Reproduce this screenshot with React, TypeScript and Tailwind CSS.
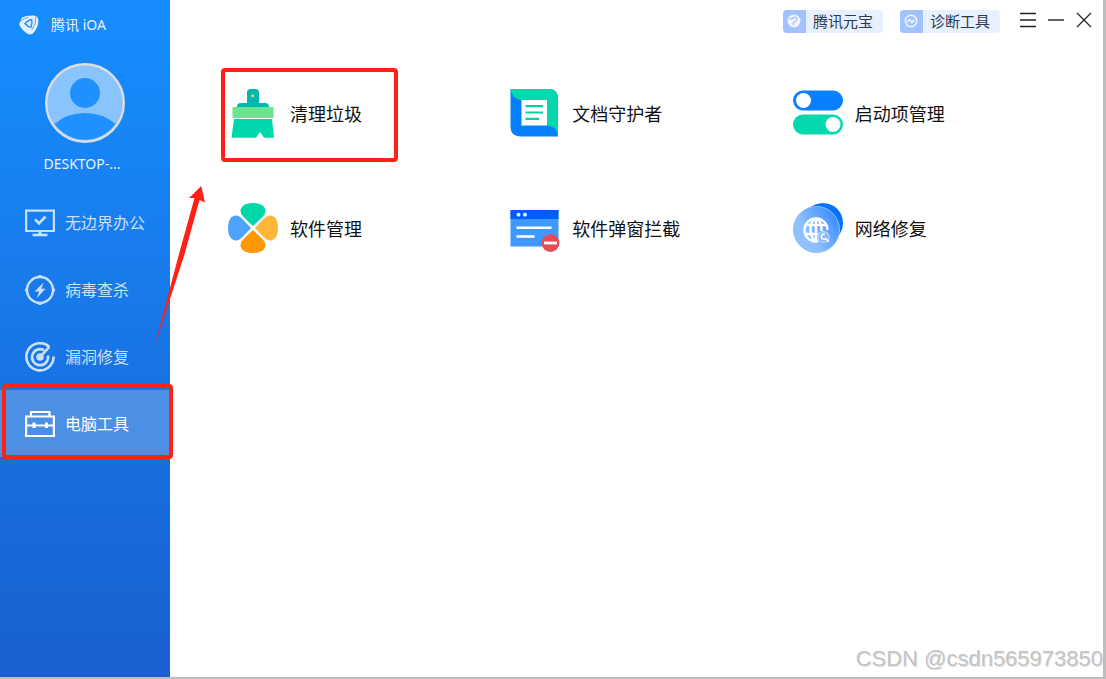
import type { ReactNode } from "react";

const LogoIcon = () => (
  <svg width="20" height="20" viewBox="0 0 20 20" aria-hidden="true">
    <path d="M3 2.500 Q8 0 15 .5 Q19 1 19.400 5 Q19.500 11 16 16 Q13 20 10.500 19.500 Q5 18 .3 10 L.6 8 Z" fill="#e4f2ff" />
    <path d="M5 8.500 Q8.500 4.500 13.300 3.800 Q14.300 8 12.500 13 Q8 12.500 5 8.500Z" fill="#1789fa" />
    <path d="M6.800 8.500 Q9 6 12.200 5.300 Q12.800 8.500 11.500 11.500 Q8.800 11 6.800 8.500Z" fill="#d3e9ff" />
    <path d="M1.500 6.500 Q5 3 9.500 2.200 M16.800 1.500 Q17.400 9 12.800 15" fill="none" stroke="#1789fa" strokeWidth=".7" />
  </svg>
);

const Avatar = () => (
  <svg width="80" height="80" viewBox="0 0 80 80" role="img" aria-label="DESKTOP">
    <circle cx="40" cy="40" r="39" fill="#8ac4ff" />
    <circle cx="40" cy="30" r="15" fill="#2190ff" />
    <path d="M9.500 61 Q22 50 40 50 Q58 50 70.500 61 A37.500 37.500 0 0 1 9.500 61Z" fill="#2190ff" />
    <circle cx="40" cy="40" r="38.800" fill="none" stroke="#dadde2" strokeWidth="2.400" />
  </svg>
);

const MonitorIcon = () => (
  <svg width="30" height="30" viewBox="0 0 30 30" fill="none" stroke="currentColor" strokeWidth="2.200" aria-hidden="true">
    <path d="M1.100 2.600H28.900V23H1.100Z" />
    <path d="M15 23V27" strokeWidth="3" />
    <path d="M7.500 27H22.500" strokeWidth="2.600" />
    <path d="M10 11.500 L14 15.500 L20.500 8.500" strokeWidth="2.600" />
  </svg>
);

const VirusIcon = () => (
  <svg width="30" height="30" viewBox="0 0 30 30" fill="none" stroke="currentColor" strokeWidth="2.400" aria-hidden="true">
    <circle cx="15" cy="15" r="13" />
    <path d="M15 0V3 M15 27V30 M0 15H3 M27 15H30" strokeWidth="3" />
    <path d="M18.500 7.500 L9.500 16.500 H14 L12 23 L20.500 13.800 H16.500Z" fill="currentColor" stroke="none" />
  </svg>
);

const RadarIcon = () => (
  <svg width="30" height="30" viewBox="0 0 30 30" fill="none" stroke="currentColor" strokeWidth="2.600" aria-hidden="true">
    <path d="M24.300 4.800 A13.600 13.600 0 1 0 28.600 14.600" />
    <path d="M19 8.200 A8 8 0 1 0 22.900 13.500" />
    <path d="M15 15 L24.300 4.800" />
    <circle cx="15" cy="15" r="2.500" fill="currentColor" />
  </svg>
);

const ToolboxIcon = () => (
  <svg width="30" height="30" viewBox="0 0 30 30" fill="none" stroke="currentColor" strokeWidth="2.200" aria-hidden="true">
    <path d="M1.100 7.500H28.900V27H1.100Z M6 7.500V3H24.500V7.500 M1 16.500H29" />
    <path d="M9 13.500V19 M21.500 13.500V19" strokeWidth="3" />
  </svg>
);

const BroomIcon = () => (
  <svg width="50" height="50" viewBox="0 0 50 50" aria-hidden="true">
    <path d="M19 4.500 Q19 1 22.500 1 H27.500 Q31 1 31 4.500 V15 H37 Q41 15 41 18.500 V19 H9 V18.500 Q9 15 13 15 H19Z" fill="#00b8ad" />
    <rect x="23.500" y="6.500" width="2.500" height="2.500" fill="#e6e84e" />
    <rect x="4.500" y="19" width="41" height="11" rx="1" fill="#69e491" />
    <path d="M6 31 H44 L46 49.800 H36 L32 44 L28 49.800 H3.500Z" fill="#00d8ab" />
  </svg>
);

const DocumentIcon = () => (
  <svg width="50" height="50" viewBox="0 0 50 50" aria-hidden="true">
    <path d="M.5 1 H40 Q48 1.500 48 11 V48.500 H11 Q.5 48.500 .5 38Z" fill="#0780ff" />
    <path d="M.5 1 H38 Q48 1 48 11 V48.500 Q47 38 37 37.500 V12 H11 Q2 11 .5 1Z" fill="#05d8ad" />
    <rect x="11.500" y="12" width="25.500" height="25.500" fill="#fff" />
    <path d="M15.500 18.200H33 M15.500 24.500H33 M15.500 30.800H29" stroke="#05d1a4" strokeWidth="2.200" />
  </svg>
);

const SwitchesIcon = () => (
  <svg width="50" height="50" viewBox="0 0 50 50" aria-hidden="true">
    <rect y="2.500" width="50" height="20" rx="10" fill="#0880ff" />
    <circle cx="10.500" cy="12.500" r="7.500" fill="#fff" />
    <rect y="26.500" width="50" height="20" rx="10" fill="#05d8ad" />
    <circle cx="40" cy="36.500" r="7.500" fill="#fff" />
  </svg>
);

const CloverIcon = () => (
  <svg width="50" height="50" viewBox="0 0 50 50" aria-hidden="true">
    <path d="M25 23 L15.500 14 Q11.500 10 12.800 6 Q15 0 25 0 Q35 0 37.200 6 Q38.500 10 34.500 14Z" fill="#00d7a8" />
    <path d="M25 27 L34.500 36 Q38.500 40 37.200 44 Q35 50 25 50 Q15 50 12.800 44 Q11.500 40 15.500 36Z" fill="#ff9800" />
    <path d="M23 25 L14 34.500 Q10 38.500 6 37.200 Q0 35 0 25 Q0 15 6 12.800 Q10 11.500 14 15.500Z" fill="#4ca4ff" />
    <path d="M27 25 L36 15.500 Q40 11.500 44 12.800 Q50 15 50 25 Q50 35 44 37.200 Q40 38.500 36 34.500Z" fill="#ffb638" />
  </svg>
);

const PopupIcon = () => (
  <svg width="50" height="50" viewBox="0 0 50 50" aria-hidden="true">
    <rect x=".5" y="7" width="48" height="36.500" fill="#3e98ff" />
    <rect x=".5" y="7" width="48" height="9" fill="#005dff" />
    <circle cx="8.500" cy="11.700" r="1.900" fill="#fff" />
    <circle cx="15" cy="11.700" r="1.900" fill="#fff" />
    <path d="M6.500 24.800H41.500 M6.500 33.500H24.500" stroke="#fff" strokeWidth="2.400" />
    <circle cx="40.500" cy="40" r="9" fill="#e34d59" />
    <path d="M34 40H47" stroke="#fff" strokeWidth="2.800" />
  </svg>
);

const NetworkIcon = () => (
  <svg width="50" height="50" viewBox="0 0 50 50" aria-hidden="true">
    <defs>
      <linearGradient id="disc" x1="0.100" y1="0.700" x2="0.900" y2="0.200">
        <stop offset="0.250" stopColor="#8fc1ff" />
        <stop offset="1" stopColor="#3f8fff" />
      </linearGradient>
    </defs>
    <circle cx="30" cy="20" r="20" fill="#0673ff" />
    <circle cx="23.500" cy="26.500" r="23" fill="url(#disc)" stroke="#8dbdf8" strokeWidth="1" />
    <g fill="none" stroke="#fff" strokeWidth="2.400">
      <path d="M34.500 27 A11.500 11.500 0 1 0 25 38.300" />
      <path d="M12 22H34 M11.500 31H25 M23 15.500V38" />
      <path d="M22 15.500 Q17 20 17.500 27 Q18 34 22 38 M24 15.500 Q29 20 28.500 28" />
    </g>
    <circle cx="30.500" cy="34" r="5.500" fill="#83b7fc" stroke="#b9d7ff" strokeWidth="1.300" />
    <path d="M32 31.500 A2.500 2.500 0 1 0 33 35 M32.500 35.500 L36 39" fill="none" stroke="#fff" strokeWidth="1.600" />
  </svg>
);

const YuanbaoIcon = () => (
  <svg width="14" height="14" viewBox="0 0 14 14" aria-hidden="true">
    <circle cx="7" cy="7" r="6.500" fill="#eef4ff" />
    <path d="M2 4.500 Q5 5.500 7 3.500 Q9.500 2.500 10 4.500 Q10 7 7.500 8 Q5.500 9 6 11" fill="none" stroke="#a1c2ff" strokeWidth="1.200" />
  </svg>
);

const DiagnoseIcon = () => (
  <svg width="14" height="14" viewBox="0 0 14 14" fill="none" stroke="#f0f6ff" strokeWidth="1.400" aria-hidden="true">
    <circle cx="7" cy="7" r="5.700" />
    <path d="M3 8 L5.500 5.500 L8 8.500 L9.500 6.500 H11" />
  </svg>
);

const navItems: { label: string; icon: ReactNode; active?: boolean }[] = [
  { label: "无边界办公", icon: <MonitorIcon /> },
  { label: "病毒查杀", icon: <VirusIcon /> },
  { label: "漏洞修复", icon: <RadarIcon /> },
  { label: "电脑工具", icon: <ToolboxIcon />, active: true },
];

const tools: { label: string; icon: ReactNode; marked?: boolean }[] = [
  { label: "清理垃圾", icon: <BroomIcon />, marked: true },
  { label: "文档守护者", icon: <DocumentIcon /> },
  { label: "启动项管理", icon: <SwitchesIcon /> },
  { label: "软件管理", icon: <CloverIcon /> },
  { label: "软件弹窗拦截", icon: <PopupIcon /> },
  { label: "网络修复", icon: <NetworkIcon /> },
];

function HeaderChip({ icon, label }: { icon: ReactNode; label: string }) {
  return (
    <button type="button" className="flex h-[23px] items-center overflow-hidden rounded-sm bg-[#e7f0ff] pr-2.5 text-[15px] leading-5 text-[#2c3a50]">
      <span className="mr-[7px] flex h-full w-[23px] items-center justify-center bg-[#a1c2ff]">{icon}</span>
      {label}
    </button>
  );
}

function Sidebar() {
  return (
    <aside className="relative flex w-[170px] shrink-0 flex-col bg-linear-to-b from-[#168eff] to-[#195fd0] text-white">
      <div className="flex h-[50px] items-center gap-3 pl-[19px] text-sm text-[#e6f3ff]">
        <LogoIcon />
        <span>腾讯 iOA</span>
      </div>
      <div className="flex flex-col items-center pt-[13px]">
        <Avatar />
        <span className="mt-[11px] pr-1.5 text-sm leading-5 text-[#e6f1ff]">DESKTOP-...</span>
      </div>
      <nav className="mt-[15px]">
        {navItems.map(({ label, icon, active }) => (
          <button
            key={label}
            type="button"
            aria-current={active ? "page" : undefined}
            className={
              active
                ? "relative flex h-[67px] w-full items-center gap-2.5 bg-[#4b90e5] pl-[25px] text-base text-white"
                : "flex h-[67px] w-full items-center gap-2.5 pl-[25px] text-base text-[#c9dffa]"
            }
          >
            {icon}
            <span>{label}</span>
            {active && <span className="absolute -top-1.5 -right-[3px] -bottom-0.5 left-0.5 z-10 rounded-sm border-4 border-[#ff2116]" />}
          </button>
        ))}
      </nav>
      <svg className="pointer-events-none absolute left-[150px] top-[180px] z-10" width="60" height="170" viewBox="0 0 60 170" aria-hidden="true">
        <path d="M51.300 6 L39 18 L44.500 18 L29 74 L4 168 L34 76 L49.500 20 L55 22.500Z" fill="#ff2116" />
      </svg>
    </aside>
  );
}

export default function App() {
  return (
    <div className="flex min-h-screen border-r-3 border-b-2 border-[#bdbdbd] bg-white font-['Noto_Sans','Noto_Sans_CJK_SC',sans-serif]">
      <Sidebar />
      <div className="flex flex-1 flex-col">
        <header className="flex h-[42px] items-center justify-end pr-[11px]">
          <div className="flex gap-[17px]">
            <HeaderChip icon={<YuanbaoIcon />} label="腾讯元宝" />
            <HeaderChip icon={<DiagnoseIcon />} label="诊断工具" />
          </div>
          <div className="ml-5 flex items-center gap-3 pb-0.5">
            <button type="button" aria-label="菜单">
              <svg className="block" width="16" height="16" viewBox="0 0 16 16" stroke="#222" strokeWidth="1.400">
                <path d="M0 1.500H16 M0 8H16 M0 14.500H16" />
              </svg>
            </button>
            <button type="button" aria-label="最小化">
              <svg className="block" width="16" height="16" viewBox="0 0 16 16" stroke="#222" strokeWidth="1.400">
                <path d="M0 8H16" />
              </svg>
            </button>
            <button type="button" aria-label="关闭">
              <svg className="block" width="16" height="16" viewBox="0 0 16 16" stroke="#222" strokeWidth="1.200">
                <path d="M1 1L15 15 M15 1L1 15" />
              </svg>
            </button>
          </div>
        </header>
        <main className="grid flex-1 auto-rows-[50px] grid-cols-3 content-start gap-y-[65px] pt-[46px] pr-[28px] pl-[58px]">
          {tools.map(({ label, icon, marked }) => (
            <button key={label} type="button" className="relative flex items-center gap-3 justify-self-start text-lg text-[#111]">
              {icon}
              <span className="pt-0.5">{label}</span>
              {marked && <span className="absolute -top-5 -right-9 -bottom-6 -left-[7px] rounded-sm border-4 border-[#ff2116]" />}
            </button>
          ))}
        </main>
        <footer className="flex justify-end pb-1 font-['Liberation_Sans',sans-serif] text-[22px] leading-7 text-[#c4c4c4] text-shadow-[1px_1px_0px_#a8a8a855]">
          CSDN @csdn565973850
        </footer>
      </div>
    </div>
  );
}
